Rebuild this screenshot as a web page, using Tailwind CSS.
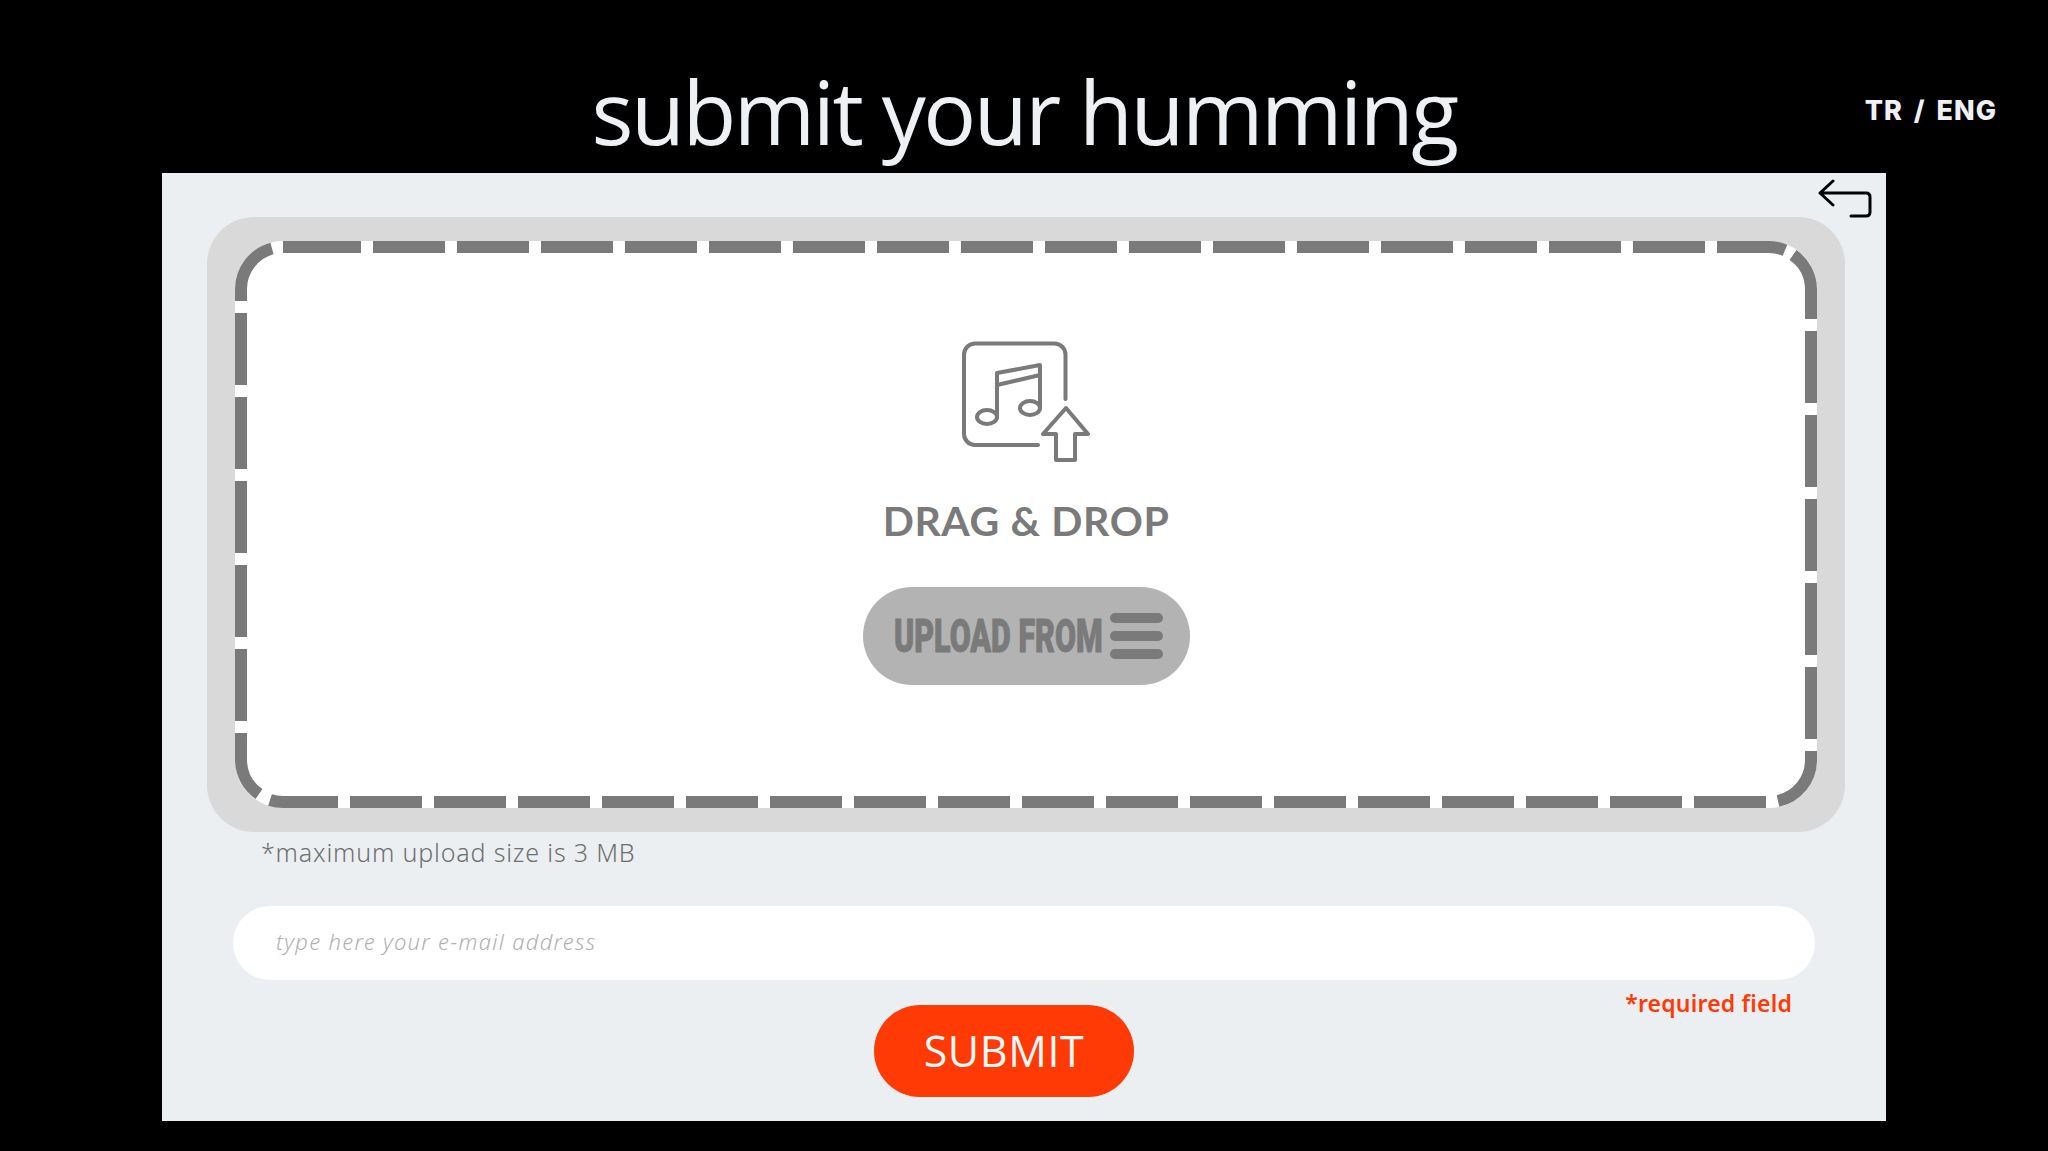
<!DOCTYPE html>
<html lang="en">
<head>
    <meta charset="UTF-8">
    <meta name="viewport" content="width=device-width, initial-scale=1.0">
    <title>Submit your humming</title>
    <script src="https://cdn.jsdelivr.net/npm/@tailwindcss/browser@4"></script>
</head>
<body class="bg-black h-[1151px] overflow-hidden font-['Lato',sans-serif]">
    <!-- Header -->
    <header class="grid grid-cols-[1fr_auto_1fr] h-[173px]">
        <div></div>
        <h1 class="font-['Open_Sans',sans-serif] font-medium text-[88px] leading-[100px] pt-[61px] text-[#eef1f4] tracking-[-2.5px]">submit your humming</h1>
        <div class="flex justify-end pr-[51px] pt-[93px]">
            <a href="#" class="font-['Inter',sans-serif] font-extrabold text-[27px] leading-[36px] text-[#eef1f4] tracking-[1px] [word-spacing:4px] whitespace-nowrap">TR / ENG</a>
        </div>
    </header>

    <!-- Panel -->
    <main class="relative ml-[162px] w-[1724px] h-[948px] bg-[#eceff2] pt-[44px]">
        <button class="absolute left-[1656px] top-[6px]" aria-label="Back">
            <svg class="block" width="56" height="40" viewBox="0 0 56 40" fill="none" stroke="#000" stroke-width="3">
                <path d="M15 2 L2 14 L15 26 M2 14 H48 Q52 14 52 18 V33 Q52 37 48 37 H33" stroke-linecap="round" stroke-linejoin="round"/>
            </svg>
        </button>

        <!-- Drop zone -->
        <section class="ml-[45px] w-[1638px] h-[615px] rounded-[47px] bg-[#d9d9d9] px-[28px] py-[24px]">
            <div class="relative h-[567px] rounded-[48px] bg-white flex flex-col items-center pt-[99px]">
                <svg class="absolute inset-0" width="1582" height="567" viewBox="235 241 1582 567" fill="none" stroke="#7a7a7a" stroke-width="12" stroke-dasharray="72 12">
                    <path d="M283 247H289 M289 247H1769A42 42 0 0 1 1785 250.2 M1793 255A42 42 0 0 1 1811 289V319 M1811 331V739 M1811 751V760A42 42 0 0 1 1778 801 M1766 802H283A42 42 0 0 1 270 800 M259 794A42 42 0 0 1 241 760V733 M241 721V313 M241 301V289A42 42 0 0 1 272 248.5"/>
                </svg>
                <svg class="block relative -ml-[2px]" width="130" height="123" viewBox="0 0 130 123" fill="none" stroke="#7a7a7a" stroke-width="4" stroke-linecap="round" stroke-linejoin="round">
                    <path d="M105.5 59V14.5A11 11 0 0 0 94.5 3.5H15A11 11 0 0 0 4 14.5V94A11 11 0 0 0 15 105H78"/>
                    <path d="M37 77V33L80 25V68M37 45L80 35"/>
                    <ellipse cx="27" cy="77" rx="10" ry="7"/>
                    <ellipse cx="70" cy="68" rx="10" ry="7"/>
                    <path d="M106 68L128 94H115V120H96V94H83Z"/>
                </svg>
                <p class="relative mt-[33px] font-bold text-[41px] leading-[50px] text-[#7a7a7a] tracking-[0.6px]">DRAG &amp; DROP</p>
                <button class="relative mt-[41px] w-[327px] h-[98px] rounded-full bg-[#b3b3b3] flex items-center justify-center gap-[9px] pl-[5px]">
                    <span class="block w-[207px] whitespace-nowrap font-['Roboto',sans-serif] font-black text-[47px] leading-[50px] text-[#7a7a7a] [-webkit-text-stroke:1px_#7a7a7a] scale-x-[0.648] origin-left">UPLOAD FROM</span>
                    <span class="flex flex-col gap-[8px] w-[53px]">
                        <span class="block h-[10px] rounded-full bg-[#7a7a7a]"></span>
                        <span class="block h-[10px] rounded-full bg-[#7a7a7a]"></span>
                        <span class="block h-[10px] rounded-full bg-[#7a7a7a]"></span>
                    </span>
                </button>
            </div>
        </section>

        <p class="ml-[99px] mt-[4px] font-['Noto_Sans',sans-serif] font-light text-[25px] leading-[32px] text-[#6f6f6f] tracking-[0.83px]">*maximum upload size is 3 MB</p>

        <input type="email" placeholder="type here your e-mail address" class="block ml-[71px] mt-[38px] w-[1582px] h-[74px] rounded-full bg-white px-[43px] pb-[5px] font-['Noto_Sans',sans-serif] font-light text-[22px] italic tracking-[1.3px] outline-none placeholder:text-[#b0b0b0]">

        <div class="flex items-start mt-[7px] pl-[712px] pr-[94px]">
            <button class="mt-[18px] w-[260px] h-[92px] rounded-full bg-[#ff3a04] font-['Open_Sans',sans-serif] font-medium text-[43px] tracking-[0.6px] text-[#f8f8f8]">SUBMIT</button>
            <span class="ml-auto font-['Noto_Sans',sans-serif] font-semibold text-[23px] tracking-[0.2px] leading-[32px] text-[#ff3a06]">*required field</span>
        </div>
    </main>
</body>
</html>
